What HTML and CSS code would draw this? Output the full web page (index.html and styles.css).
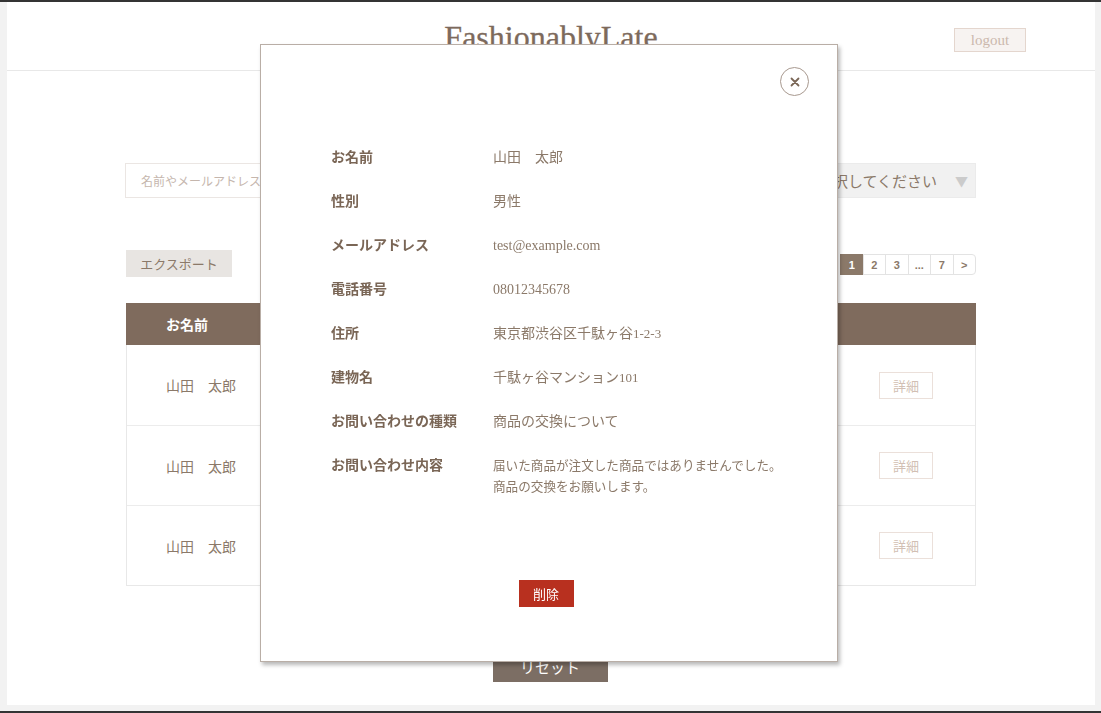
FILE: index.html
```html
<!DOCTYPE html>
<html lang="ja">
<head>
<meta charset="utf-8">
<title>FashionablyLate - Admin</title>
<link rel="stylesheet" href="styles.css">
</head>
<body>
<div class="page">
  <header class="header">
    <div class="header-side"></div>
    <h1 class="logo">FashionablyLate</h1>
    <div class="header-side header-right"><button class="logout">logout</button></div>
  </header>

  <main class="main">
    <form class="search">
      <div class="search-input">名前やメールアドレスを入力してください</div>
      <div class="select select-small"></div>
      <div class="select select-small"></div>
      <div class="select select-cat"><span>選択してください</span><span class="tri">▼</span></div>
    </form>

    <div class="tools">
      <button class="export" type="button">エクスポート</button>
      <nav class="pager">
        <span class="pg active">1</span>
        <span class="pg">2</span>
        <span class="pg">3</span>
        <span class="pg">...</span>
        <span class="pg">7</span>
        <span class="pg last">&gt;</span>
      </nav>
    </div>

    <div class="table">
      <div class="thead">
        <span class="c-name">お名前</span>
        <span class="c-mid"></span>
        <span class="c-btn"></span>
      </div>
      <div class="trow">
        <span class="c-name">山田　太郎</span>
        <span class="c-mid"></span>
        <span class="c-btn"><button class="detail" type="button">詳細</button></span>
      </div>
      <div class="trow">
        <span class="c-name">山田　太郎</span>
        <span class="c-mid"></span>
        <span class="c-btn"><button class="detail" type="button">詳細</button></span>
      </div>
      <div class="trow">
        <span class="c-name">山田　太郎</span>
        <span class="c-mid"></span>
        <span class="c-btn"><button class="detail" type="button">詳細</button></span>
      </div>
    </div>

    <div class="reset-wrap"><button class="reset" type="button">リセット</button></div>
  </main>
</div>

<div class="modal">
  <div class="modal-top">
    <button class="close" type="button" aria-label="close">
      <svg width="10" height="10" viewBox="0 0 10 10"><path d="M1.5 1.5 L8.5 8.5 M8.5 1.5 L1.5 8.5" stroke="#7a6656" stroke-width="1.8" stroke-linecap="round" fill="none"/></svg>
    </button>
  </div>
  <dl class="detail-list">
    <div class="drow"><dt>お名前</dt><dd>山田　太郎</dd></div>
    <div class="drow"><dt>性別</dt><dd>男性</dd></div>
    <div class="drow"><dt>メールアドレス</dt><dd>test@example.com</dd></div>
    <div class="drow"><dt>電話番号</dt><dd>08012345678</dd></div>
    <div class="drow"><dt>住所</dt><dd>東京都渋谷区千駄ヶ谷<span class="num">1-2-3</span></dd></div>
    <div class="drow"><dt>建物名</dt><dd>千駄ヶ谷マンション<span class="num">101</span></dd></div>
    <div class="drow"><dt>お問い合わせの種類</dt><dd>商品の交換について</dd></div>
    <div class="drow"><dt>お問い合わせ内容</dt><dd class="long">届いた商品が注文した商品ではありませんでした。<br>商品の交換をお願いします。</dd></div>
  </dl>
  <div class="modal-foot"><button class="delete" type="button">削除</button></div>
</div>
</body>
</html>
```

FILE: styles.css
```css
* { box-sizing: border-box; }

html, body { margin: 0; padding: 0; }

body {
  height: 713px;
  overflow: hidden;
  background: #f2f2f2;
  border-top: 2px solid #343434;
  border-bottom: 2px solid #343434;
  padding: 0 6px 6px 7px;
  font-family: "Noto Sans CJK JP", "Noto Sans", sans-serif;
  color: #8b7969;
}

button { font-family: inherit; cursor: pointer; }

.page {
  height: 703px;
  background: #fff;
}

.header {
  height: 69px;
  border-bottom: 1px solid #e8e8e8;
  display: grid;
  grid-template-columns: 1fr auto 1fr;
  align-items: center;
}

.logo {
  margin: 0;
  font-family: "Liberation Serif", "DejaVu Serif", serif;
  font-weight: normal;
  font-size: 32px;
  line-height: 1;
  color: #7d6a5c;
  padding-top: 1px;
  -webkit-text-stroke: 0.3px #7d6a5c;
}

.header-right {
  display: flex;
  justify-content: flex-end;
  padding-right: 69px;
}

.logout {
  margin-top: 8px;
  width: 72px;
  height: 24px;
  padding: 0;
  background: #f7f3f1;
  border: 1px solid #e4d6ce;
  color: #cbb8ad;
  font-family: "Liberation Serif", serif;
  font-size: 15px;
}

.main {
  width: 850px;
  margin: 0 auto;
  padding-top: 92px;
}

.search {
  display: flex;
  justify-content: space-between;
  align-items: center;
  margin: 0 0 0 -1px;
  height: 35px;
}

.search-input {
  width: 270px;
  height: 35px;
  border: 1px solid #ebe6e3;
  padding-left: 15px;
  font-size: 12px;
  line-height: 33px;
  color: #c5b6ad;
  white-space: nowrap;
  overflow: hidden;
}

.select {
  height: 35px;
  background: #f1f1f1;
  border: 1px solid #ebebeb;
  display: flex;
  align-items: center;
  justify-content: space-between;
  font-size: 15px;
  color: #8b7969;
}

.select-small { width: 110px; padding: 0 8px 0 12px; }

.select-cat { width: 170px; padding: 0 7px 0 11px; }

.tri { color: #cbcbcb; font-size: 13px; }

.tools {
  margin-top: 52px;
  display: flex;
  justify-content: space-between;
  align-items: center;
  height: 27px;
}

.export {
  width: 106px;
  height: 27px;
  padding: 0;
  border: none;
  background: #e8e5e2;
  color: #8b7969;
  font-size: 13px;
}

.pager {
  display: flex;
  margin-top: 2px;
}

.pg {
  width: 23.5px;
  height: 21px;
  border: 1px solid #e3e3e3;
  margin-left: -1px;
  display: flex;
  align-items: center;
  justify-content: center;
  font-family: "Liberation Sans", sans-serif;
  font-size: 11px;
  font-weight: bold;
  color: #8b7969;
  background: #fff;
}

.pg.active { background: #8b7969; border-color: #8b7969; color: #fff; }

.pg.last { border-radius: 0 4px 4px 0; }

.table {
  margin-top: 26px;
  border: 1px solid #e8e8e8;
  border-top: none;
}

.thead, .trow {
  display: grid;
  grid-template-columns: 170px 530px 1fr;
  align-items: center;
  padding-left: 39px;
}

.thead {
  height: 42px;
  background: #7f6b5d;
  color: #fff;
  font-weight: bold;
  font-size: 14px;
  margin: 0 -1px;
  padding-left: 40px;
}

.trow {
  height: 80px;
  font-size: 14px;
  color: #8b7969;
}

.trow + .trow { border-top: 1px solid #ececec; }

.c-btn { display: flex; justify-content: flex-end; padding-right: 42px; }

.detail {
  width: 54px;
  height: 27px;
  padding: 0;
  border: 1px solid #ebe0da;
  background: #fff;
  color: #d2bfb3;
  font-size: 13px;
}

.reset-wrap {
  display: flex;
  justify-content: center;
  margin-top: 64px;
}

.reset {
  width: 115px;
  height: 32px;
  padding: 0;
  border: none;
  background: #7c6e64;
  color: #fff;
  font-size: 15px;
  position: relative;
  left: -1px;
}

/* Modal */
.modal {
  position: fixed;
  left: 260px;
  top: 44px;
  width: 578px;
  height: 618px;
  background: #fff;
  border: 1px solid #b9aea6;
  box-shadow: 2px 3px 4px rgba(0, 0, 0, 0.28);
  display: flex;
  flex-direction: column;
}

.modal-top {
  display: flex;
  justify-content: flex-end;
  padding: 22px 28px 0 0;
}

.close {
  width: 29px;
  height: 29px;
  padding: 0;
  border: 1px solid #a8998f;
  border-radius: 50%;
  background: #fff;
  display: flex;
  align-items: center;
  justify-content: center;
}

.detail-list {
  margin: 52px 0 0 0;
  padding-left: 70px;
}

.drow {
  display: grid;
  grid-template-columns: 162px 1fr;
  height: 44px;
  line-height: 20px;
}

.drow:last-child { height: 42px; }

dt {
  font-weight: bold;
  font-size: 14px;
  color: #7a6656;
  margin-top: -2px;
}

dd {
  margin: 0;
  font-family: "Liberation Serif", "Noto Sans CJK JP", serif;
  font-size: 14px;
  color: #8b7969;
}

.num { font-size: 13px; }

dd.long {
  font-size: 12.6px;
  line-height: 21px;
}

.modal-foot {
  display: flex;
  justify-content: center;
  margin-top: 82px;
  padding-right: 6px;
}

.delete {
  width: 55px;
  height: 27px;
  padding: 0;
  border: none;
  background: #b8301f;
  color: #fff;
  font-size: 13px;
}
```
